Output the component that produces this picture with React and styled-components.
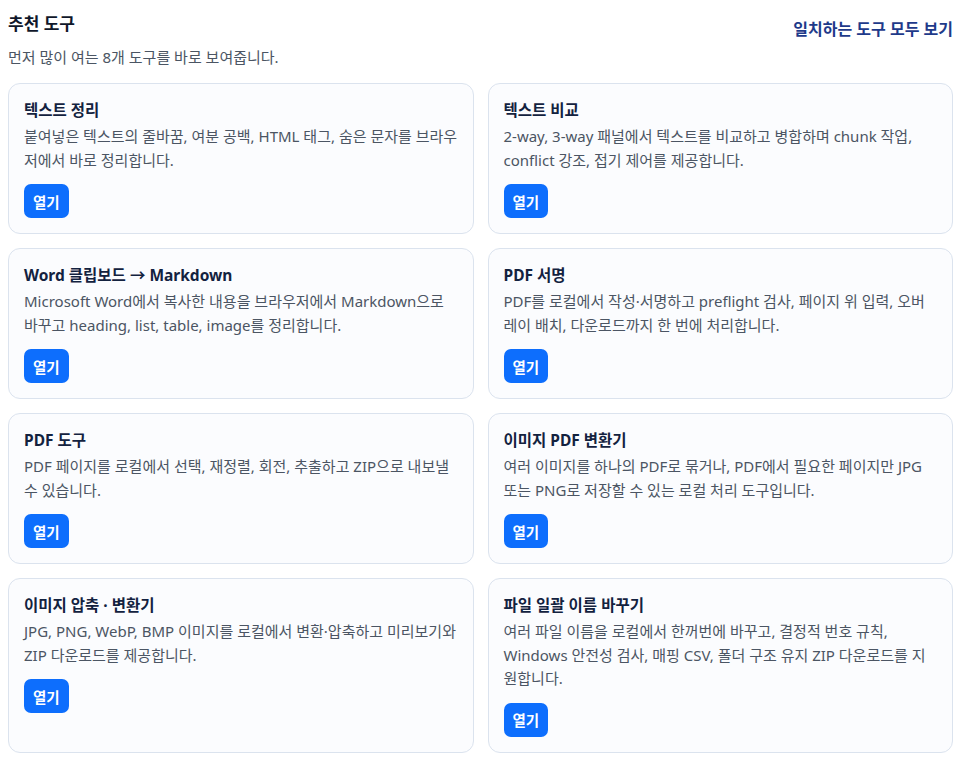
import React from 'react';
import styled, { createGlobalStyle } from 'styled-components';

const GlobalStyle = createGlobalStyle`
  body {
    margin: 0;
    background: #ffffff;
    font-family: "Noto Sans", "Noto Sans CJK KR", sans-serif;
  }
`;

const Section = styled.section`
  padding: 12px 5px 10px 8px;
`;

const HeaderRow = styled.div`
  display: flex;
  justify-content: space-between;
  align-items: flex-start;
`;

const TitleBlock = styled.div`
  display: flex;
  flex-direction: column;
`;

const Title = styled.h2`
  margin: 0;
  font-size: 17px;
  line-height: 24px;
  font-weight: 700;
  color: #0f172a;
`;

const Subtitle = styled.p`
  margin: 9px 0 0;
  font-size: 15px;
  line-height: 24px;
  color: #4b5563;
`;

const AllLink = styled.a`
  margin-top: 5px;
  font-size: 16px;
  line-height: 24px;
  font-weight: 700;
  color: #1e3a8a;
  text-decoration: none;
  cursor: pointer;
`;

const Grid = styled.div`
  display: grid;
  grid-template-columns: 1fr 1fr;
  gap: 14px;
  margin-top: 14px;
`;

const Card = styled.article`
  display: flex;
  flex-direction: column;
  align-items: flex-start;
  padding: 15px 14px 15px 15px;
  border: 1px solid #dbe3ee;
  border-radius: 12px;
  background: #fbfcfe;
`;

const CardTitle = styled.h3`
  margin: 0;
  font-size: 15.5px;
  line-height: 22px;
  font-weight: 700;
  color: #13223f;
`;

const CardText = styled.p`
  margin: 4px 0 12px;
  font-size: 15px;
  line-height: 23.5px;
  color: #4b5563;
`;

const OpenButton = styled.button`
  height: 34px;
  padding: 0 9px;
  border: none;
  border-radius: 7px;
  background: #0d6efd;
  color: #ffffff;
  font-family: inherit;
  font-size: 14.5px;
  font-weight: 700;
  cursor: pointer;
`;

const tools = [
  {
    title: '텍스트 정리',
    text: '붙여넣은 텍스트의 줄바꿈, 여분 공백, HTML 태그, 숨은 문자를 브라우저에서 바로 정리합니다.'
  },
  {
    title: '텍스트 비교',
    text: '2-way, 3-way 패널에서 텍스트를 비교하고 병합하며 chunk 작업, conflict 강조, 접기 제어를 제공합니다.'
  },
  {
    title: 'Word 클립보드 → Markdown',
    text: 'Microsoft Word에서 복사한 내용을 브라우저에서 Markdown으로 바꾸고 heading, list, table, image를 정리합니다.'
  },
  {
    title: 'PDF 서명',
    text: 'PDF를 로컬에서 작성·서명하고 preflight 검사, 페이지 위 입력, 오버레이 배치, 다운로드까지 한 번에 처리합니다.'
  },
  {
    title: 'PDF 도구',
    text: 'PDF 페이지를 로컬에서 선택, 재정렬, 회전, 추출하고 ZIP으로 내보낼 수 있습니다.'
  },
  {
    title: '이미지 PDF 변환기',
    text: '여러 이미지를 하나의 PDF로 묶거나, PDF에서 필요한 페이지만 JPG 또는 PNG로 저장할 수 있는 로컬 처리 도구입니다.'
  },
  {
    title: '이미지 압축 · 변환기',
    text: 'JPG, PNG, WebP, BMP 이미지를 로컬에서 변환·압축하고 미리보기와 ZIP 다운로드를 제공합니다.'
  },
  {
    title: '파일 일괄 이름 바꾸기',
    text: '여러 파일 이름을 로컬에서 한꺼번에 바꾸고, 결정적 번호 규칙, Windows 안전성 검사, 매핑 CSV, 폴더 구조 유지 ZIP 다운로드를 지원합니다.'
  }
];

const App = () => (
  <>
    <GlobalStyle />
    <Section>
      <HeaderRow>
        <TitleBlock>
          <Title>추천 도구</Title>
          <Subtitle>먼저 많이 여는 8개 도구를 바로 보여줍니다.</Subtitle>
        </TitleBlock>
        <AllLink>일치하는 도구 모두 보기</AllLink>
      </HeaderRow>

      <Grid>
        {tools.map(tool => (
          <Card key={tool.title}>
            <CardTitle>{tool.title}</CardTitle>
            <CardText>{tool.text}</CardText>
            <OpenButton>열기</OpenButton>
          </Card>
        ))}
      </Grid>
    </Section>
  </>
);

export default App;
